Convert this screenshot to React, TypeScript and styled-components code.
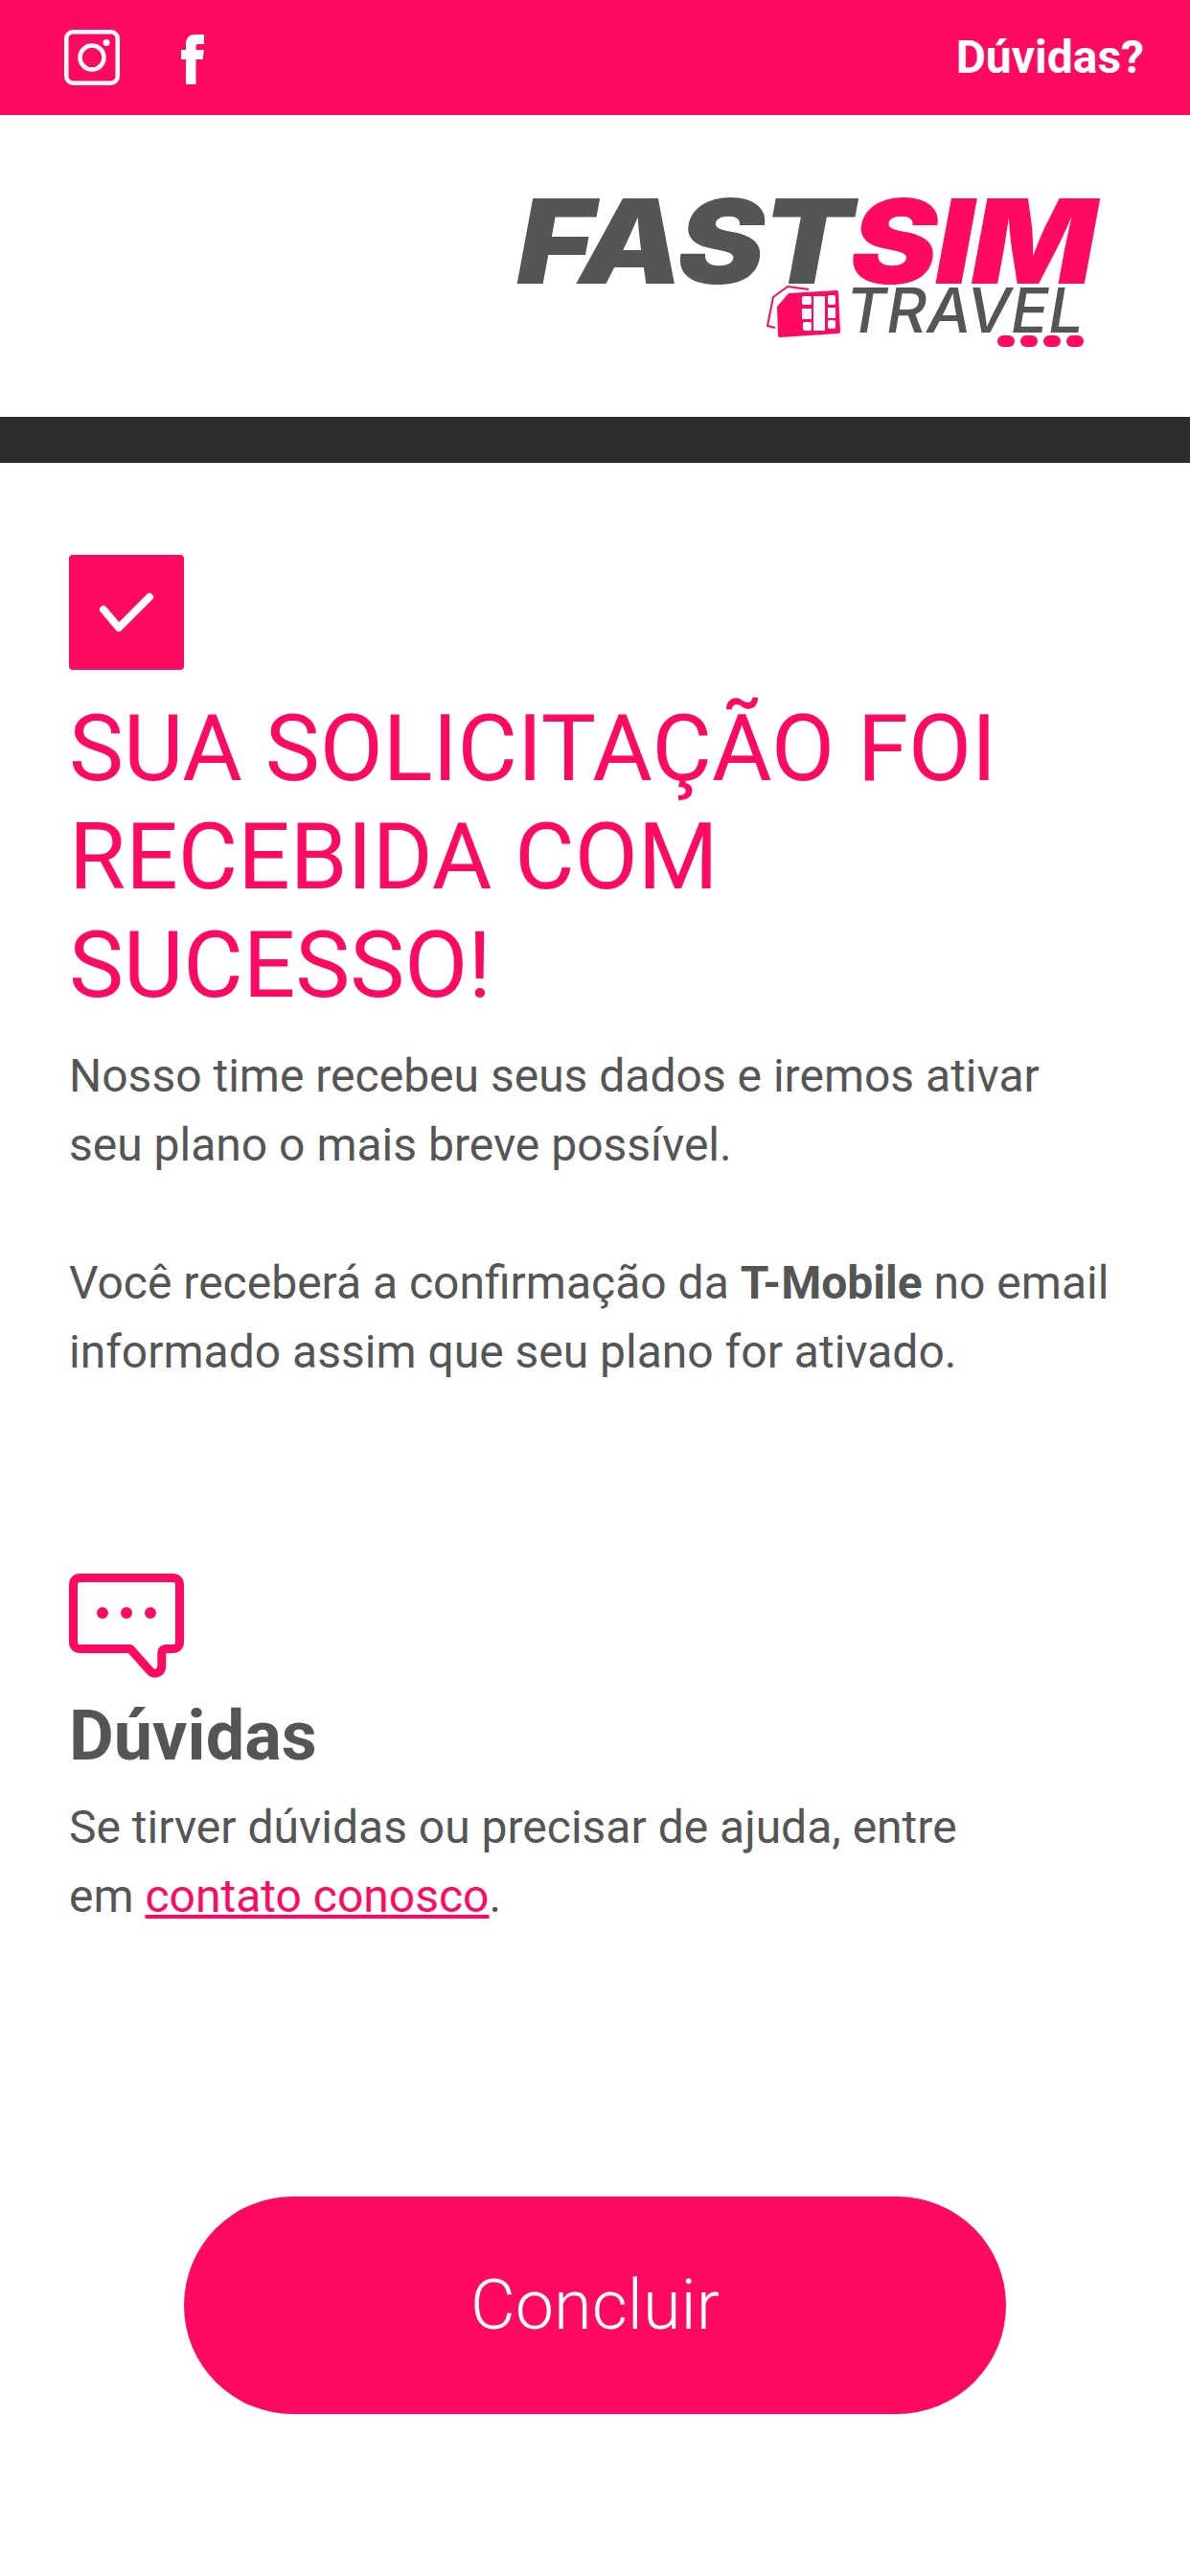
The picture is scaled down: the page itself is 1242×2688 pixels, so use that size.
import React from "react";
import styled, { createGlobalStyle } from "styled-components";

const PINK = "#ff0a62";
const GREY = "#555555";

const GlobalStyle = createGlobalStyle`
  html, body {
    margin: 0;
    padding: 0;
    background: #fff;
    font-family: Roboto, "Liberation Sans", sans-serif;
  }
`;

const Page = styled.div`
  width: 1242px;
  height: 2688px;
  display: flex;
  flex-direction: column;
  overflow: hidden;
`;

const TopBar = styled.header`
  height: 120px;
  flex-shrink: 0;
  background: ${PINK};
  display: flex;
  align-items: center;
  justify-content: space-between;
  padding: 0 48px 0 67px;
`;

const Socials = styled.div`
  display: flex;
  align-items: center;
  gap: 64px;
`;

const FacebookGlyph = styled.svg`
  margin-top: 4px;
`;

const HelpLink = styled.a`
  color: #fff;
  font-size: 48px;
  font-weight: 700;
  margin-top: -2px;
`;

const LogoRow = styled.div`
  height: 315px;
  flex-shrink: 0;
  display: flex;
  justify-content: flex-end;
  padding: 85px 100px 0 0;
  box-sizing: border-box;
`;

const Logo = styled.div`
  display: flex;
  flex-direction: column;
  align-items: flex-end;
`;

const LogoMain = styled.div`
  font-family: Inter, Roboto, sans-serif;
  font-size: 122px;
  font-weight: 900;
  font-style: italic;
  line-height: 93px;
  letter-spacing: -2px;
  color: ${GREY};
  transform: scaleX(1.12);
  transform-origin: right center;
`;

const LogoAccent = styled.span`
  color: ${PINK};
`;

const LogoSub = styled.div`
  display: flex;
  align-items: flex-start;
  gap: 6px;
  padding-right: 11px;
`;

const LogoTravel = styled.div`
  font-family: Inter, Roboto, sans-serif;
  font-size: 65px;
  font-weight: 500;
  font-style: italic;
  line-height: 52px;
  color: ${GREY};
`;

const LogoDots = styled.div`
  display: flex;
  justify-content: flex-end;
  gap: 6px;
`;

const LogoDot = styled.span`
  width: 18px;
  height: 12px;
  border-radius: 6px;
  background: ${PINK};
`;

const DarkBar = styled.div`
  height: 48px;
  flex-shrink: 0;
  background: #2d2d2d;
`;

const Content = styled.main`
  padding: 96px 60px 0 72px;
  display: flex;
  flex-direction: column;
  align-items: flex-start;
`;

const CheckBox = styled.div`
  width: 120px;
  height: 120px;
  background: ${PINK};
  border-radius: 4px;
  display: flex;
  align-items: center;
  justify-content: center;
`;

const Title = styled.h1`
  margin: 26px 0 0;
  font-size: 96px;
  font-weight: 400;
  line-height: 113px;
  color: ${PINK};
  width: 1040px;
`;

const Paragraph = styled.p`
  margin: 0;
  font-size: 48px;
  line-height: 72px;
  color: ${GREY};
`;

const Intro = styled(Paragraph)`
  margin-top: 23px;
`;

const Spaced = styled(Paragraph)`
  margin-top: 72px;
`;

const ChatIcon = styled.svg`
  margin-top: 195px;
  display: block;
`;

const SectionTitle = styled.h2`
  margin: 18px 0 0;
  font-size: 72px;
  font-weight: 700;
  line-height: 84px;
  color: ${GREY};
`;

const HelpText = styled(Paragraph)`
  margin-top: 17px;
`;

const PinkLink = styled.a`
  color: ${PINK};
  text-decoration: underline;
`;

const ButtonRow = styled.div`
  display: flex;
  padding: 277px 0 0 192px;
`;

const PrimaryButton = styled.button`
  width: 858px;
  height: 227px;
  border: none;
  border-radius: 114px;
  background: ${PINK};
  color: #fff;
  font-family: Roboto, sans-serif;
  font-size: 72px;
  font-weight: 300;
`;

const InstagramIcon = () => (
  <svg width="58" height="58" viewBox="0 0 58 58" fill="none" stroke="#fff">
    <rect x="2.25" y="2.25" width="53.5" height="53.5" rx="7" strokeWidth="4.5" />
    <circle cx="29" cy="29" r="12.5" strokeWidth="4.5" />
    <circle cx="44" cy="13.5" r="3.5" fill="#fff" stroke="none" />
  </svg>
);

const FacebookIcon = () => (
  <FacebookGlyph width="24" height="52" viewBox="0 0 24 52" fill="#fff">
    <path d="M5 52V26H0V16h5V10C5 3 9 0 15 0h9v10h-6c-2 0-2.500 1-2.500 3v3h8.500l-1.500 10h-7v26z" />
  </FacebookGlyph>
);

const SimIcon = () => (
  <svg width="77" height="54" viewBox="0 0 77 54">
    <path
      d="M9 44 L1 42 L7 12 L22 1 L44 4"
      fill="none"
      stroke={PINK}
      strokeWidth="2"
      strokeLinejoin="round"
    />
    <path
      d="M11 22 L23 8 L73 5 Q75 5 75 7 L77 48 Q77 50 75 50 L14 54 Q12 54 12 52 Z"
      fill={PINK}
    />
    <g fill="#fff">
      <rect x="37" y="11" width="10" height="9" rx="2" />
      <rect x="37" y="24" width="10" height="11" />
      <rect x="38" y="38" width="9" height="9" rx="2" />
      <rect x="49" y="11" width="12" height="36" />
      <rect x="64" y="10" width="8" height="10" rx="2" />
      <rect x="64" y="23" width="8" height="11" />
      <rect x="64" y="36" width="8" height="9" rx="2" />
    </g>
  </svg>
);

export default function App() {
  return (
    <Page>
      <GlobalStyle />
      <TopBar>
        <Socials>
          <InstagramIcon />
          <FacebookIcon />
        </Socials>
        <HelpLink>Dúvidas?</HelpLink>
      </TopBar>

      <LogoRow>
        <Logo>
          <LogoMain>
            FAST<LogoAccent>SIM</LogoAccent>
          </LogoMain>
          <LogoSub>
            <SimIcon />
            <div>
              <LogoTravel>TRAVEL</LogoTravel>
              <LogoDots>
                <LogoDot />
                <LogoDot />
                <LogoDot />
                <LogoDot />
              </LogoDots>
            </div>
          </LogoSub>
        </Logo>
      </LogoRow>

      <DarkBar />

      <Content>
        <CheckBox>
          <svg width="58" height="44" viewBox="0 0 58 44" fill="none">
            <path
              d="M5 19 L21 38 L53 6"
              stroke="#fff"
              strokeWidth="8"
              strokeLinecap="round"
              strokeLinejoin="round"
            />
          </svg>
        </CheckBox>
        <Title>SUA SOLICITAÇÃO FOI RECEBIDA COM SUCESSO!</Title>
        <Intro>
          Nosso time recebeu seus dados e iremos ativar
          <br />
          seu plano o mais breve possível.
        </Intro>
        <Spaced>
          Você receberá a confirmação da <strong>T-Mobile</strong> no email
          <br />
          informado assim que seu plano for ativado.
        </Spaced>

        <ChatIcon width="120" height="110" viewBox="0 0 120 110" fill="none">
          <path
            d="M12 4.500 H108 Q115.500 4.500 115.500 12 V71 Q115.500 78.500 108 78.500 H101 Q96.800 78.500 96.800 83 V96 C96.800 105 88 106 84 101 L64 78.500 H12 Q4.500 78.500 4.500 71 V12 Q4.500 4.500 12 4.500 Z"
            stroke={PINK}
            strokeWidth="9"
            strokeLinejoin="round"
          />
          <circle cx="35" cy="41" r="6" fill={PINK} />
          <circle cx="60" cy="41" r="6" fill={PINK} />
          <circle cx="85" cy="41" r="6" fill={PINK} />
        </ChatIcon>
        <SectionTitle>Dúvidas</SectionTitle>
        <HelpText>
          Se tirver dúvidas ou precisar de ajuda, entre
          <br />
          em <PinkLink>contato conosco</PinkLink>.
        </HelpText>
      </Content>

      <ButtonRow>
        <PrimaryButton>Concluir</PrimaryButton>
      </ButtonRow>
    </Page>
  );
}
